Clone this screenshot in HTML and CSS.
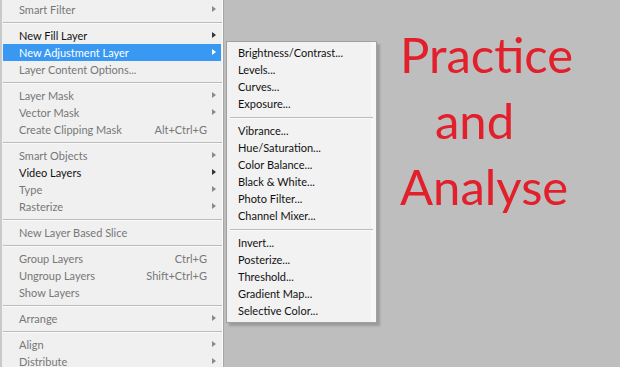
FILE: index.html
```html
<!DOCTYPE html>
<html>
<head>
<meta charset="utf-8">
<link rel="stylesheet" href="styles.css">
</head>
<body>
<div class="screen">
  <div class="menu main">
    <div class="item dis sub">Smart Filter</div>
    <div class="sep"></div>
    <div class="item sub">New Fill Layer</div>
    <div class="item sub hi">New Adjustment Layer</div>
    <div class="item dis">Layer Content Options...</div>
    <div class="sep"></div>
    <div class="item dis sub">Layer Mask</div>
    <div class="item dis sub">Vector Mask</div>
    <div class="item dis"><span>Create Clipping Mask</span><span class="key">Alt+Ctrl+G</span></div>
    <div class="sep"></div>
    <div class="item dis sub">Smart Objects</div>
    <div class="item sub">Video Layers</div>
    <div class="item dis sub">Type</div>
    <div class="item dis sub">Rasterize</div>
    <div class="sep"></div>
    <div class="item dis">New Layer Based Slice</div>
    <div class="sep"></div>
    <div class="item dis"><span>Group Layers</span><span class="key">Ctrl+G</span></div>
    <div class="item dis"><span>Ungroup Layers</span><span class="key">Shift+Ctrl+G</span></div>
    <div class="item dis">Show Layers</div>
    <div class="sep"></div>
    <div class="item dis sub">Arrange</div>
    <div class="sep"></div>
    <div class="item dis sub">Align</div>
    <div class="item dis sub">Distribute</div>
  </div>
  <div class="menu submenu">
    <div class="item">Brightness/Contrast...</div>
    <div class="item">Levels...</div>
    <div class="item">Curves...</div>
    <div class="item">Exposure...</div>
    <div class="sep"></div>
    <div class="item">Vibrance...</div>
    <div class="item">Hue/Saturation...</div>
    <div class="item">Color Balance...</div>
    <div class="item">Black &amp; White...</div>
    <div class="item">Photo Filter...</div>
    <div class="item">Channel Mixer...</div>
    <div class="sep"></div>
    <div class="item">Invert...</div>
    <div class="item">Posterize...</div>
    <div class="item">Threshold...</div>
    <div class="item">Gradient Map...</div>
    <div class="item">Selective Color...</div>
  </div>
  <div class="title">
    <div class="line l1">Practice</div>
    <div class="line l2">and</div>
    <div class="line l3">Analyse</div>
  </div>
</div>
</body>
</html>
```
FILE: styles.css
```css
html, body {
  margin: 0;
  padding: 0;
  background: #bebebe;
}
.screen {
  width: 620px;
  height: 367px;
  overflow: hidden;
  display: flex;
  align-items: flex-start;
  font-family: Lato, "Open Sans", sans-serif;
  font-size: 11px;
}
.menu {
  background: #f0f0f0;
  box-sizing: border-box;
}
.main {
  width: 224px;
  height: 367px;
  padding-top: 1px;
  border-left: 2px solid #c9c9c9;
  border-right: 1px solid #a6a6a6;
  box-shadow: inset -1px 0 0 #fbfbfb;
  flex: none;
}
.item {
  height: 17px;
  line-height: 18px;
  padding-left: 16px;
  padding-right: 14px;
  color: #111;
  display: flex;
  justify-content: space-between;
  position: relative;
  white-space: nowrap;
}
.main .item { margin-left: 1px; margin-right: 2px; }
.item.dis { color: #777; }
.item.hi { background: #3898f2; color: #fff; }
.sub::after {
  content: "";
  position: absolute;
  right: 5px;
  top: 5px;
  border-left: 4px solid #333;
  border-top: 3.5px solid transparent;
  border-bottom: 3.5px solid transparent;
}
.dis.sub::after { border-left-color: #8a8a8a; }
.hi.sub::after { border-left-color: #fff; }
.sep {
  height: 9px;
  position: relative;
  margin: 0 1px 0 1px;
}
.sep::before {
  content: "";
  position: absolute;
  left: 0;
  right: 0;
  top: 4px;
  height: 1px;
  background: #bcbcbc;
  box-shadow: 0 1px 0 #fafafa;
}
.submenu {
  margin-top: 41px;
  margin-left: 2px;
  width: 151px;
  padding: 2px 2px 3px 2px;
  border: 1px solid #a0a0a0;
  background: #f2f2f2;
  box-shadow: inset -5px 0 0 #f7f7f7, 3px 3px 2px rgba(0,0,0,0.18);
  flex: none;
}
.submenu .item { padding-left: 9px; color: #111; }
.submenu .sep { height: 10px; margin: 0 1px; }
.submenu .sep::before { top: 5px; }
.title {
  margin-left: 23px;
  margin-top: 21px;
  color: #e2202b;
  font-family: Lato, "Open Sans", sans-serif;
  font-size: 49px;
  line-height: 66px;
}
.l2 { padding-left: 35px; }
```
